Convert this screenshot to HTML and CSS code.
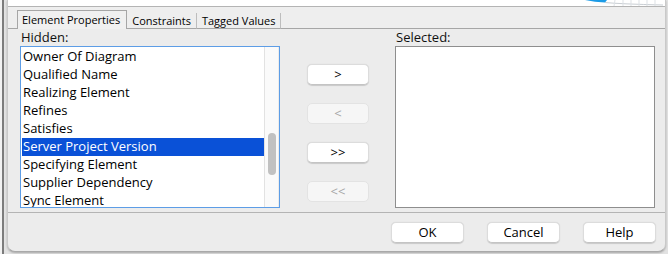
FILE: index.html
```html
<!DOCTYPE html>
<html lang="en">

<head>
    <meta charset="UTF-8">
    <title>Element Properties</title>
    <link rel="stylesheet" href="styles.css">
</head>

<body>
    <div class="frame">
        <div class="dialog">
            <div class="preview">
                <svg class="preview-art" width="80" height="6" viewBox="0 0 80 6">
                    <path d="M0 0 L22 0 L20 2.5 Q10 2 0 0 Z" fill="#1c9be6" />
                    <path d="M20 2.5 Q35 4 78 5" stroke="#c9ced3" stroke-width="1" fill="none" />
                    <g stroke="#dde1e5" stroke-width="1">
                        <line x1="30" y1="0" x2="29" y2="6" />
                        <line x1="38" y1="0" x2="38" y2="6" />
                        <line x1="46" y1="0" x2="46" y2="6" />
                        <line x1="54" y1="0" x2="54" y2="6" />
                        <line x1="62" y1="0" x2="62" y2="6" />
                        <line x1="70" y1="0" x2="70" y2="6" />
                    </g>
                </svg>
            </div>

            <div class="tabs">
                <div class="tab-lead"></div>
                <div class="tab active">Element Properties</div>
                <div class="tab">Constraints</div>
                <div class="tab">Tagged Values</div>
                <div class="tab-rest"></div>
            </div>

            <div class="tab-body">
                <div class="column">
                    <div class="label">Hidden:</div>
                    <div class="listbox">
                        <ul class="items">
                            <li>Owner Of Diagram</li>
                            <li>Qualified Name</li>
                            <li>Realizing Element</li>
                            <li>Refines</li>
                            <li>Satisfies</li>
                            <li class="selected">Server Project Version</li>
                            <li>Specifying Element</li>
                            <li>Supplier Dependency</li>
                            <li>Sync Element</li>
                        </ul>
                        <div class="scrollbar">
                            <div class="thumb"></div>
                        </div>
                    </div>
                </div>

                <div class="mover">
                    <button class="button">&gt;</button>
                    <button class="button" disabled>&lt;</button>
                    <button class="button">&gt;&gt;</button>
                    <button class="button" disabled>&lt;&lt;</button>
                </div>

                <div class="column">
                    <div class="label">Selected:</div>
                    <div class="selected-box"></div>
                </div>
            </div>

            <div class="footer">
                <button class="button wide">OK</button>
                <button class="button wide">Cancel</button>
                <button class="button wide">Help</button>
            </div>
        </div>
    </div>
</body>

</html>
```

FILE: styles.css
```css
/* General Reset */
* {
    margin: 0;
    padding: 0;
    box-sizing: border-box;
}

body {
    width: 668px;
    height: 254px;
    overflow: hidden;
    font-family: "Open Sans", "Noto Sans", sans-serif;
    font-size: 13px;
    color: #000;
    background: #f2f2f2;
}

.frame {
    height: 254px;
    margin-left: 2px;
    padding-left: 3px;
    border-left: 2px solid #7c7c7c;
    background: #e2e2e2;
}

.dialog {
    width: 659px;
    height: 252px;
    display: flex;
    flex-direction: column;
    background: #ececec;
    border-left: 1px solid #c9c9c9;
    border-right: 1px solid #c9c9c9;
    border-bottom: 1px solid #a9a9a9;
    border-radius: 0 0 8px 8px;
    box-shadow: 0 1px 2px rgba(0, 0, 0, 0.25);
}

/* white strip of the diagram behind */
.preview {
    height: 7px;
    display: flex;
    justify-content: flex-end;
    background: #fff;
    border-bottom: 1px solid #b4b4b4;
}

/* tabs */
.tabs {
    height: 22px;
    display: flex;
    align-items: flex-end;
    background: #eeeeee;
}

.tab-lead {
    width: 9px;
    height: 1px;
    background: #a6a6a6;
}

.tab {
    height: 16px;
    padding: 0 5px;
    font-size: 11px;
    line-height: 15px;
    color: #000;
    border-right: 1px solid #bdbdbd;
    border-bottom: 1px solid #a6a6a6;
}

.tab.active {
    height: 19px;
    line-height: 18px;
    padding: 0 6px 0 4px;
    background: #f0f0f0;
    border: 1px solid #a6a6a6;
    border-bottom: none;
}

.tab-rest {
    flex: 1;
    height: 1px;
    background: #a6a6a6;
}

/* lists and mover buttons */
.tab-body {
    display: flex;
    align-items: flex-start;
    padding: 1px 0 0 12px;
    height: 183px;
}

.column {
    width: 260px;
    display: flex;
    flex-direction: column;
}

.label {
    height: 16px;
    padding-left: 1px;
    line-height: 14px;
    font-size: 13px;
    color: #111;
}

.listbox {
    height: 162px;
    display: flex;
    border: 1px solid #5d9de6;
    background: #fff;
    overflow: hidden;
}

.items {
    list-style: none;
    flex: 1;
    padding: 1px 0 0 1px;
}

.items li {
    height: 18px;
    line-height: 17px;
    padding-left: 1px;
    white-space: nowrap;
}

.items li.selected {
    background: #0a51d7;
    color: #fff;
}

.scrollbar {
    width: 15px;
    padding: 86px 0 0 3px;
    background: #fafafa;
    border-left: 1px solid #e2e2e2;
    border-right: 1px solid #ececec;
}

.thumb {
    width: 8px;
    height: 42px;
    border-radius: 4px;
    background: #c1c1c1;
}

.mover {
    display: flex;
    flex-direction: column;
    gap: 18px;
    margin: 0 26px 0 27px;
    padding-top: 34px;
}

.button {
    width: 62px;
    height: 21px;
    font-family: "Open Sans", "Noto Sans", sans-serif;
    font-size: 13px;
    line-height: 19px;
    color: #000;
    background: #fff;
    border: 1px solid #dcdcdc;
    border-bottom-color: #c4c4c4;
    border-radius: 5px;
    box-shadow: 0 0.5px 1px rgba(0, 0, 0, 0.15);
}

.button:disabled {
    color: #a6a6a6;
    background: #f6f6f6;
    border-color: #e3e3e3;
    box-shadow: none;
}

.selected-box {
    height: 162px;
    background: #fff;
    border: 1px solid #8e8e8e;
}

/* dialog buttons */
.footer {
    flex: 1;
    display: flex;
    justify-content: flex-end;
    align-items: flex-start;
    gap: 23px;
    padding: 9px 9px 0 0;
    border-top: 1px solid #b4b4b4;
}

.button.wide {
    width: 73px;
}
```
